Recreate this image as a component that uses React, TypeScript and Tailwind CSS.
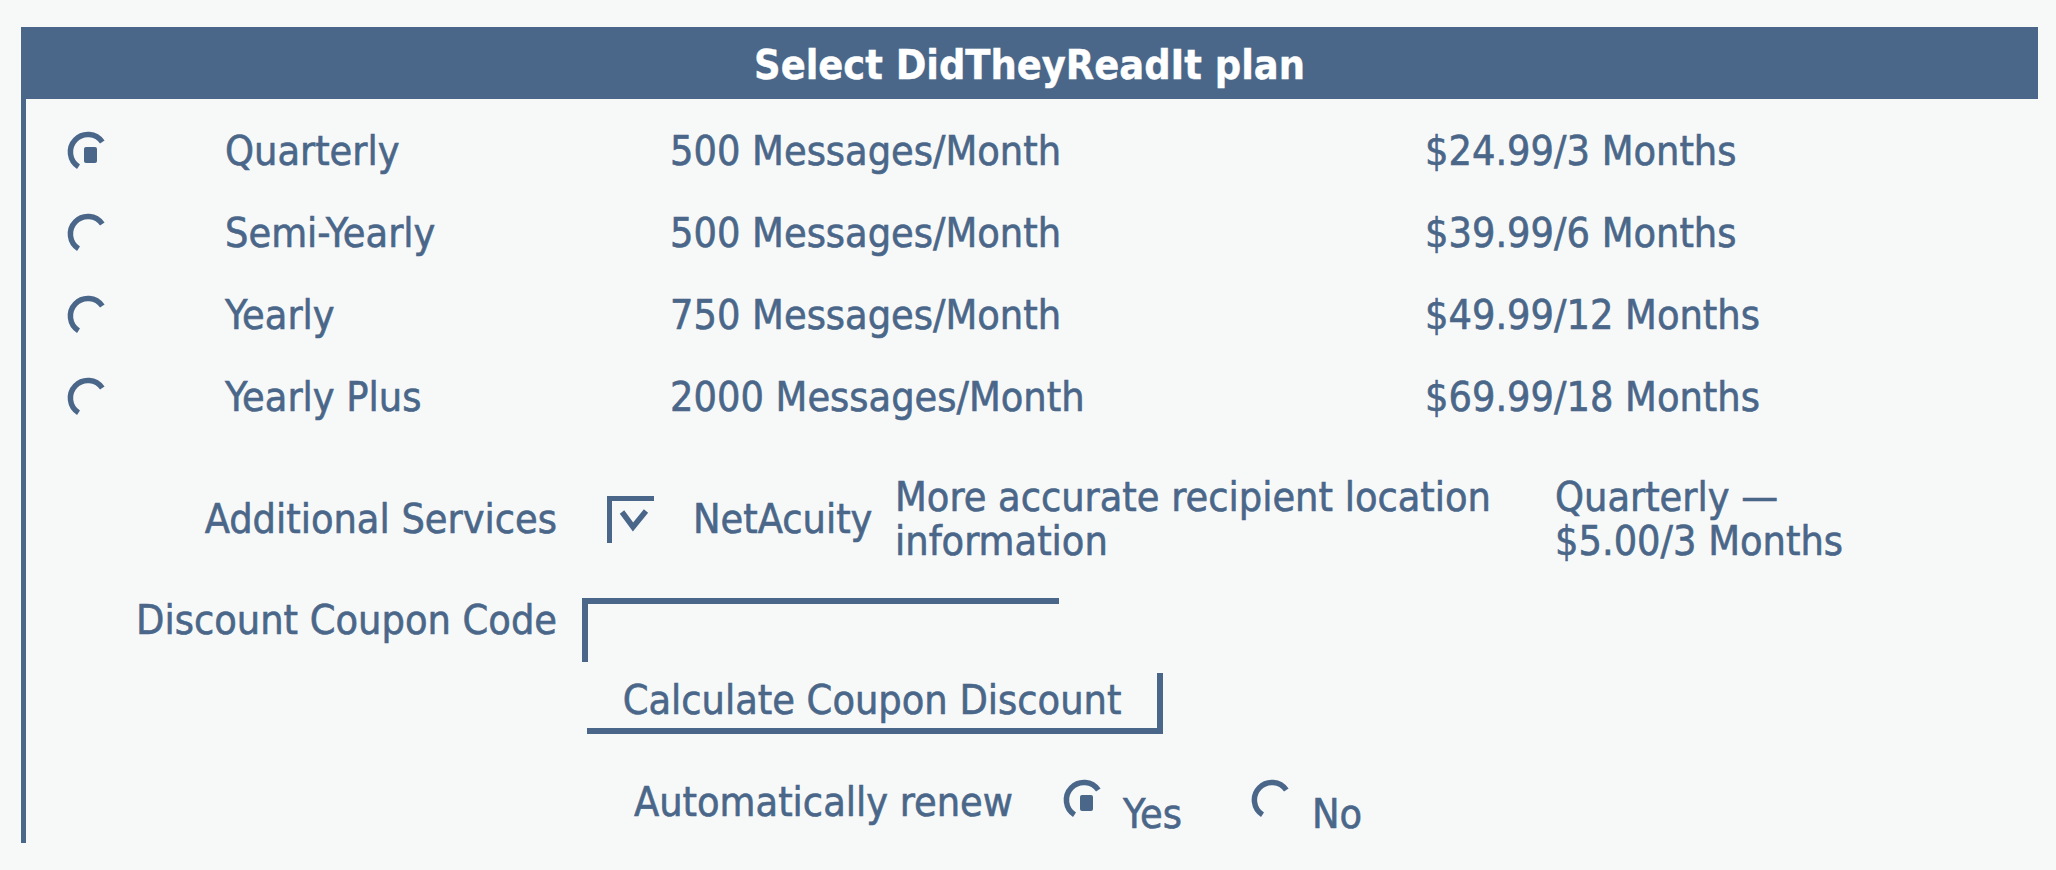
const plans = [
  { name: "Quarterly", messages: "500 Messages/Month", price: "$24.99/3 Months", checked: true },
  { name: "Semi-Yearly", messages: "500 Messages/Month", price: "$39.99/6 Months", checked: false },
  { name: "Yearly", messages: "750 Messages/Month", price: "$49.99/12 Months", checked: false },
  { name: "Yearly Plus", messages: "2000 Messages/Month", price: "$69.99/18 Months", checked: false },
];

// old-style sunken radio: only the dark top-left arc shows
function Radio({ checked }: { checked?: boolean }) {
  return (
    <svg width="44" height="44" viewBox="0 0 44 44" className="shrink-0">
      <path d="M36.3 12 A17.5 17.5 0 1 0 12.5 36.7" fill="none" stroke="#4a6789" strokeWidth="5.5" />
      {checked && <rect x="18" y="17" width="13" height="16" rx="2" fill="#4a6789" />}
    </svg>
  );
}

function Checkbox() {
  return (
    <div className="h-[47px] w-[47px] shrink-0 border-l-[5px] border-t-[5px] border-[#4a6789]">
      <svg width="42" height="42" viewBox="0 0 42 42">
        <polyline points="10,11 21,26 34,10" fill="none" stroke="#4a6789" strokeWidth="5.5" />
      </svg>
    </div>
  );
}

export default function App() {
  return (
    <div className="min-h-screen bg-[#f7f9f9] pl-[21px] pr-[18px] pt-[27px] font-['DejaVu_Sans_Condensed','Liberation_Sans',sans-serif] text-[41px] text-[#4a6789] [-webkit-text-stroke:0.6px_#4a6789]">
      {/* title bar */}
      <div className="h-[72px] bg-[#4a6789] pt-[5px] text-center font-bold leading-[67px] text-white [-webkit-text-stroke:0.4px_#ffffff]">
        Select DidTheyReadIt plan
      </div>

      <div className="h-[744px] border-l-[5px] border-[#4a6789]">
        {/* plans */}
        <div className="pl-[40px] pt-[12px]">
          {plans.map((p) => (
            <div key={p.name} className="grid h-[82px] grid-cols-[159px_445px_755px_1fr] items-center">
              <Radio checked={p.checked} />
              <span>{p.name}</span>
              <span>{p.messages}</span>
              <span>{p.price}</span>
            </div>
          ))}
        </div>

        {/* additional services */}
        <div className="mt-[36px] flex h-[88px] items-center leading-[44px]">
          <div className="w-[531px] shrink-0 text-right">Additional Services</div>
          <div className="ml-[50px]">
            <Checkbox />
          </div>
          <div className="ml-[39px] w-[202px] shrink-0">NetAcuity</div>
          <div className="w-[660px] shrink-0">More accurate recipient location information</div>
          <div className="w-[320px] shrink-0">Quarterly — $5.00/3 Months</div>
        </div>

        {/* coupon */}
        <div className="mt-[35px] flex items-start">
          <div className="w-[531px] shrink-0 text-right leading-[44px]">Discount Coupon Code</div>
          <input
            type="text"
            className="ml-[25px] h-[64px] w-[477px] border-l-[6px] border-t-[6px] border-[#4a6789] bg-transparent outline-none"
          />
        </div>
        <div className="mt-[8px] pl-[561px]">
          <button className="h-[61px] w-[576px] border-b-[6px] border-r-[6px] border-[#4a6789] text-center leading-[47px]">
            Calculate Coupon Discount
          </button>
        </div>

        {/* renew */}
        <div className="mt-[44px] flex items-start pl-[608px] leading-[44px]">
          <span className="mt-[2px] w-[386px] shrink-0">Automatically renew</span>
          <div className="ml-[42px]">
            <Radio checked />
          </div>
          <span className="ml-[17px] mt-[14px] w-[63px] shrink-0">Yes</span>
          <div className="ml-[64px]">
            <Radio />
          </div>
          <span className="ml-[18px] mt-[14px]">No</span>
        </div>
      </div>
    </div>
  );
}
